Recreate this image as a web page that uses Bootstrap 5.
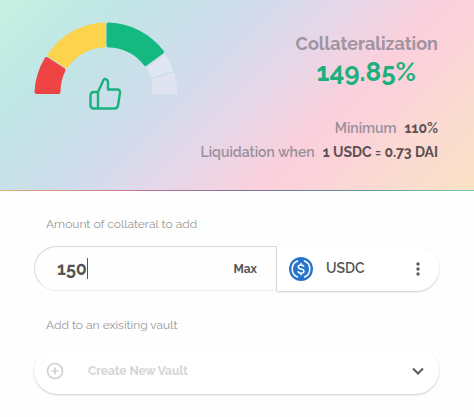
<!DOCTYPE html>
<html lang="en">
<head>
<meta charset="utf-8">
<meta name="viewport" content="width=device-width, initial-scale=1">
<title>Collateral vault</title>
<link href="https://cdn.jsdelivr.net/npm/bootstrap@5.3.0/dist/css/bootstrap.min.css" rel="stylesheet">
<style>
body{font-family:Raleway,Lato,sans-serif;font-variant-numeric:oldstyle-nums;color:#585858;background:#fefefe}
.summary{padding:22px 36px 26px 34px;background:linear-gradient(135deg,#c5f1e0 0%,#c0e6e6 18%,#cfdcec 38%,#e6d7e9 53%,#fbd0dc 67%,#fbd2da 74%,#fbdad2 84%,#fbe2c6 100%)}
.rule{height:1px;background:linear-gradient(90deg,#dfb175,#c87595 28%,#78719b 52%,#5f9b9e 78%,#78cdae)}
.gauge{width:144px;height:88px}
.heading{font-size:18px;line-height:20px;font-weight:700;color:#9f949f;margin-top:12px}
.percent{font-size:26px;line-height:36px;font-weight:700;color:#1db07f;margin-right:22px}
.facts{font-size:14px;line-height:24px;color:#98909a;margin-top:26px}
.facts dt{font-weight:600}
.facts dd{font-weight:700;color:#5d5054}
.vault-form{padding:24px 35px 20px 34px}
.field-label{font-size:12px;line-height:18px;color:#989898;margin:0 0 13px 12px}
.pill{height:45px;border-radius:23px}
.amount-box{flex:0 0 60%;border:1px solid #d8d8d8;border-bottom-color:#eee;border-radius:23px 0 0 23px;padding-left:22px;padding-right:12px}
.amount{width:30px;padding:0;border:0;outline:0;background:none;font-size:18px;font-weight:700;color:#555}
.caret{width:1px;height:21px;background:#555}
.max{font-size:12px;font-weight:700;color:#555;padding:4px 6px}
.token{border-radius:0 23px 23px 0;box-shadow:0 1px 2px #ccc;background:#fff;padding:0 12px}
.token-name{font-size:14px;font-weight:600;color:#555;background:none;padding:0}
.vault-label{margin-top:25px}
.vault-box{height:47px;border-radius:24px;box-shadow:0 1px 2px #ccc;background:#fff;padding:0 14px 0 12px}
.vault-select{appearance:none;border:0;background:none;outline:0;font-size:12px;font-weight:700;color:#d5d5d5;padding:0;margin-left:24px}
</style>
<script src="https://cdn.jsdelivr.net/npm/bootstrap@5.3.0/dist/js/bootstrap.bundle.min.js"></script>
</head>
<body>
<header class="summary d-flex justify-content-between">
  <svg class="gauge flex-shrink-0" viewBox="0 0 144 88" role="img" aria-label="Healthy collateralization">
    <g stroke-width="4" stroke-linejoin="round">
      <path d="M2.500 70A69.500 69.500 0 0 1 12.500 37L29.500 48A49 49 0 0 0 24.500 70Z" fill="#ef4444" stroke="#ef4444"/>
      <path d="M15.500 33A69.500 69.500 0 0 1 70 2.500V23.500A48 48 0 0 0 32.500 44Z" fill="#fcd34d" stroke="#fcd34d"/>
      <path d="M74.500 2.500A69.500 69.500 0 0 1 128 30L111.500 42A48 48 0 0 0 74.500 23.500Z" fill="#13b981" stroke="#13b981"/>
    </g>
    <path d="M131 32A71.500 71.500 0 0 1 139.500 49L117 55.500A46 46 0 0 0 112.500 46Z" fill="#e0e6f3"/>
    <path d="M140 50.500A71.500 71.500 0 0 1 143.500 72H118A46 46 0 0 0 117 57Z" fill="#e0e4f1"/>
    <path fill="none" stroke="#1db07f" stroke-width="2.400" stroke-linejoin="round" stroke-linecap="round" d="M64 70L69.500 58Q70.500 56 72.500 57.500Q74.500 59 74 62V67.500H83Q86.500 67.500 86 71L84 83.500Q83.500 86.500 80.500 86.500H60Q56.500 86.500 56.500 83V73.500Q56.500 70 60 70ZM64 70V86.500"/>
  </svg>
  <div class="text-end">
    <div class="heading">Collateralization</div>
    <div class="percent">149.85%</div>
    <dl class="facts mb-0">
      <div class="d-flex justify-content-end gap-2"><dt>Minimum</dt><dd class="mb-0">110%</dd></div>
      <div class="d-flex justify-content-end gap-2"><dt>Liquidation when</dt><dd class="mb-0">1 USDC = 0.73 DAI</dd></div>
    </dl>
  </div>
</header>
<div class="rule"></div>
<form class="vault-form">
  <label class="field-label d-block" for="amount">Amount of collateral to add</label>
  <div class="pill d-flex">
    <div class="amount-box d-flex align-items-center">
      <input class="amount" id="amount" type="text" inputmode="decimal" value="150">
      <span class="caret"></span>
      <button class="btn max ms-auto" type="button">Max</button>
    </div>
    <div class="token d-flex align-items-center flex-grow-1">
      <svg class="me-2" width="24" height="24" viewBox="0 0 24 24" aria-hidden="true">
        <circle cx="12" cy="12" r="12" fill="#2775ca"/>
        <g fill="none" stroke="#fff" stroke-width="1.500">
          <path d="M9 3.800A8.700 8.700 0 0 0 9 20.200M15 3.800A8.700 8.700 0 0 1 15 20.200"/>
          <path d="M14.800 9.900Q14.500 8 12 8Q9.300 8 9.300 10Q9.300 11.600 12 12Q14.900 12.500 14.900 14.200Q14.900 16.200 12 16.200Q9.400 16.200 9.100 14.100M12 6V8M12 16.200V18.300"/>
        </g>
      </svg>
      <button class="token-name btn ms-1" type="button">USDC</button>
      <button class="btn border-0 p-0 ms-auto d-flex" type="button" aria-label="Token options">
        <svg width="18" height="18" viewBox="0 0 18 18" fill="#5a5a5a"><circle cx="9" cy="4" r="1.700"/><circle cx="9" cy="9" r="1.700"/><circle cx="9" cy="14" r="1.700"/></svg>
      </button>
    </div>
  </div>
  <label class="field-label vault-label d-block" for="vault">Add to an exisiting vault</label>
  <div class="vault-box d-flex align-items-center">
    <svg width="18" height="18" viewBox="0 0 18 18" fill="none" stroke="#d2d2d2" stroke-width="1.700" aria-hidden="true"><circle cx="9" cy="9" r="7.500"/><path d="M9 5.500V12.500M5.500 9H12.500"/></svg>
    <select class="vault-select flex-grow-1" id="vault"><option>Create New Vault</option></select>
    <svg width="14" height="14" viewBox="0 0 14 14" fill="none" stroke="#5a5a5a" stroke-width="2" aria-hidden="true"><path d="M2 4.500L7 9.500L12 4.500"/></svg>
  </div>
</form>
</body>
</html>
